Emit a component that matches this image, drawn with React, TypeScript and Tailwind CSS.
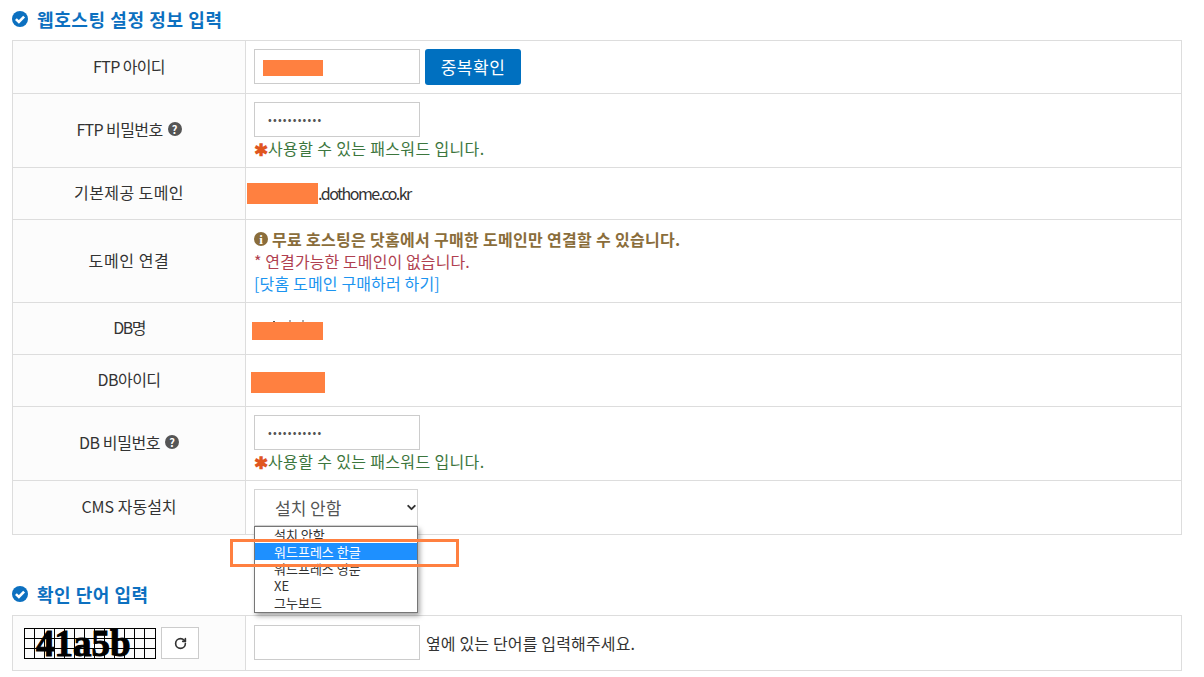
import { ReactNode } from "react";
import { ChevronDown, RotateCw } from "lucide-react";

const font = "font-['Noto_Sans_CJK_KR','Liberation_Sans',sans-serif]";

function CheckCircle() {
  return (
    <svg width="16" height="16" viewBox="0 0 16 16" className="shrink-0">
      <circle cx="8" cy="8" r="8" fill="#0c70c0" />
      <path d="M3.9 8.1 6.9 11l5.2-5.4" fill="none" stroke="#fff" strokeWidth="2.6" />
    </svg>
  );
}

function Help() {
  return (
    <span className="inline-flex h-[14px] w-[14px] shrink-0 items-center justify-center rounded-full bg-[#555] text-[11px] font-bold leading-none tracking-normal text-white">
      ?
    </span>
  );
}

function Heading({ children, tracking }: { children: ReactNode; tracking: string }) {
  return (
    <h2 className={`flex items-center gap-[9px] pl-3 text-[18px] font-bold leading-[24px] text-[#0c70c0] ${tracking}`}>
      <CheckCircle />
      {children}
    </h2>
  );
}

function Row({ label, h, children }: { label: ReactNode; h: string; children: ReactNode }) {
  return (
    <div className={`flex border-b border-[#ddd] ${h}`}>
      <div className="flex w-[233px] shrink-0 items-center justify-center gap-[5px] border-r border-[#ddd] bg-[#fcfcfc] pb-[3px]">
        {label}
      </div>
      <div className="min-w-0 flex-1 px-2">{children}</div>
    </div>
  );
}

function Patch({ className }: { className: string }) {
  return <div className={`bg-[#ff8040] ${className}`} />;
}

function PasswordOk() {
  return (
    <>
      <div className="flex h-[35px] w-[166px] items-center border border-[#ccc] bg-white pl-[13px] text-[11px] tracking-[1.2px] text-[#555]">
        <span className="leading-none">•••••••••••</span>
      </div>
      <p className="flex items-center text-[16px] leading-[22px] tracking-[0.35px] text-[#3c763d]">
        <span className="w-[14px] text-[17px] font-bold leading-none tracking-normal text-[#e0561f]">✱</span>
        사용할 수 있는 패스워드 입니다.
      </p>
    </>
  );
}

function Captcha() {
  return (
    <div className="relative h-[31px] w-[132px] border border-black">
      <svg width="130" height="29" className="absolute left-0 top-0">
        {[10, 20, 30, 40, 50, 60, 70, 80, 90, 100, 110, 120].map((x) => (
          <line key={x} x1={x - 0.5} x2={x - 0.5} y1="0" y2="29" stroke="#000" />
        ))}
        {[9, 19].map((y) => (
          <line key={y} x1="0" x2="130" y1={y + 0.5} y2={y + 0.5} stroke="#000" />
        ))}
      </svg>
      <span className="absolute left-[11px] top-0 font-['Liberation_Serif',serif] text-[37px] font-bold leading-[29px] text-black [-webkit-text-stroke:1px_black]">
        41a5b
      </span>
    </div>
  );
}

export default function App() {
  return (
    <div className={`relative h-[677px] w-[1204px] overflow-hidden bg-white pr-[22px] pt-[7px] text-[16px] text-[#333] ${font}`}>
      <Heading tracking="tracking-[0.6px]">웹호스팅 설정 정보 입력</Heading>

      <div className="ml-3 mt-[9px] border-l border-r border-t border-[#ddd]">
        <Row label={<span className="tracking-[-0.64px]">FTP 아이디</span>} h="h-[53px]">
          <div className="flex items-start gap-[5px] pt-2">
            <div className="flex h-[35px] w-[166px] items-center border border-[#ccc] bg-white pl-2">
              <Patch className="mt-[3px] h-4 w-[60px]" />
            </div>
            <button className="h-9 w-[96px] rounded-[3px] bg-[#0070c0] text-[17px] tracking-[0.5px] text-white">
              중복확인
            </button>
          </div>
        </Row>
        <Row label={<><span className="tracking-[-0.6px]">FTP 비밀번호</span><Help /></>} h="h-[74px]">
          <div className="pt-2">
            <PasswordOk />
          </div>
        </Row>
        <Row label={<span className="tracking-[0.4px]">기본제공 도메인</span>} h="h-[52px]">
          <div className="-ml-[7px] flex h-full items-center pb-[2px] tracking-[-1.5px]">
            <Patch className="mt-[2px] h-[21px] w-[71px]" />
            .dothome.co.kr
          </div>
        </Row>
        <Row label={<span className="tracking-[0.6px]">도메인 연결</span>} h="h-[83px]">
          <div className="flex flex-col pt-[8px] leading-[22px]">
            <p className="flex items-center gap-[4px] font-bold tracking-[0.3px] text-[#8a6d3b]">
              <span className="flex h-[14px] w-[14px] items-center justify-center rounded-full bg-[#8a6d3b] font-['Liberation_Serif',serif] text-[13px] font-bold leading-none tracking-normal text-white">
                i
              </span>
              무료 호스팅은 닷홈에서 구매한 도메인만 연결할 수 있습니다.
            </p>
            <p className="tracking-[0.1px] text-[#b03f50]">* 연결가능한 도메인이 없습니다.</p>
            <p className="tracking-[0.15px] text-[#1c94f0]">[닷홈 도메인 구매하러 하기]</p>
          </div>
        </Row>
        <Row label={<span className="tracking-[-1.5px]">DB명</span>} h="h-[52px]">
          <div className="relative -ml-[2px] mt-[19px] h-[18px] w-[71px] bg-[#ff8040]">
            {/* bits of the covered text that stick out above the patch */}
            <svg width="71" height="3" className="absolute left-0 top-[-3px]">
              <path d="M21 2.5h2M38 1v2M51 1v2" stroke="#555" fill="none" />
            </svg>
          </div>
        </Row>
        <Row label={<span className="tracking-[-0.5px]">DB아이디</span>} h="h-[52px]">
          <Patch className="-ml-[3px] mt-[17px] h-[21px] w-[74px]" />
        </Row>
        <Row label={<><span className="tracking-[-0.4px]">DB 비밀번호</span><Help /></>} h="h-[74px]">
          <div className="pt-2">
            <PasswordOk />
          </div>
        </Row>
        <Row label="CMS 자동설치" h="h-[54px]">
          <div className="pt-2">
            <div className="flex h-[37px] w-[164px] items-center justify-between border border-[#d5d5d5] bg-white pl-5 text-[17px] text-[#555]">
              설치 안함
              <ChevronDown size={13} strokeWidth={3.5} className="-mr-px text-[#333]" />
            </div>
          </div>
        </Row>
      </div>

      <div className="mt-[47px]">
        <Heading tracking="tracking-[0.5px]">확인 단어 입력</Heading>
      </div>

      <div className="ml-3 mt-[9px] border-l border-r border-t border-[#ddd]">
        <div className="flex h-[55px] border-b border-[#ddd]">
          <div className="flex w-[233px] shrink-0 items-center gap-[5px] border-r border-[#ddd] bg-[#fcfcfc] pl-[11px]">
            <Captcha />
            <div className="flex h-[32px] w-[38px] items-center justify-center border border-[#ccc] bg-white">
              <RotateCw size={13} strokeWidth={3} className="text-[#333]" />
            </div>
          </div>
          <div className="flex flex-1 items-center gap-[6px] px-2 pb-px">
            <div className="h-[35px] w-[166px] border border-[#ccc] bg-white" />
            <span className="tracking-[0.15px]">옆에 있는 단어를 입력해주세요.</span>
          </div>
        </div>
      </div>

      {/* open select list */}
      <div className="absolute left-[254px] top-[526px] flex h-[87px] w-[164px] flex-col border border-[#767676] bg-white pl-[19px] text-[13px] leading-[17px] text-[#333] shadow-[2px_3px_5px_rgba(0,0,0,0.35)]">
        <div className="h-[16px] leading-[16px]">설치 안함</div>
        <div className="-ml-[19px] h-[17px] bg-[#1e90ff] pl-[19px] text-white">워드프레스 한글</div>
        <div className="h-[17px]">워드프레스 영문</div>
        <div className="h-[17px]">XE</div>
        <div className="h-[17px]">그누보드</div>
      </div>

      {/* annotation */}
      <div className="absolute left-[230px] top-[539px] h-[28px] w-[229px] border-[3px] border-[#ff8040]" />
    </div>
  );
}
